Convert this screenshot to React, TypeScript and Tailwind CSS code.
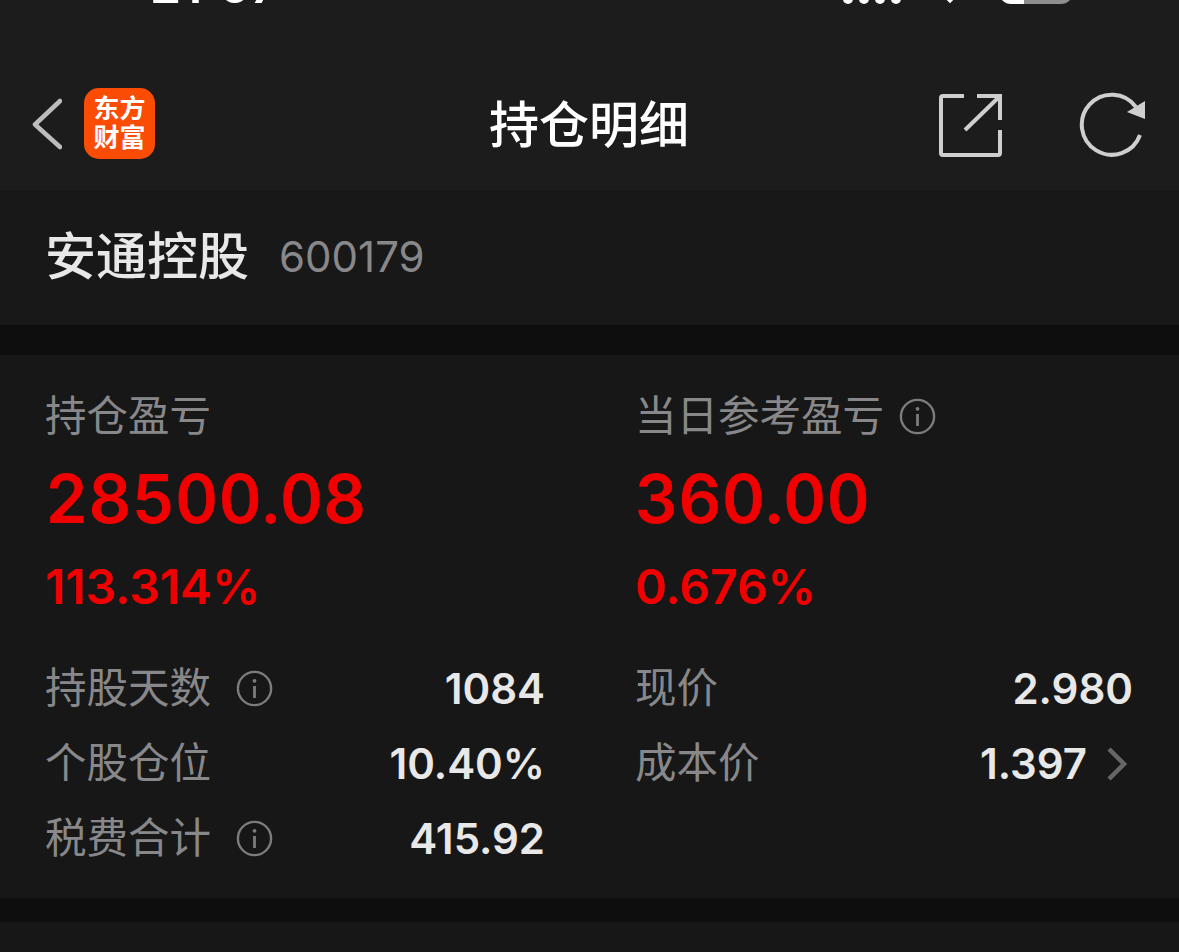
const FONT = "font-['Inter','Noto_Sans_CJK_SC',sans-serif]";

function InfoIcon() {
  return (
    <svg width="37" height="37" viewBox="0 0 37 37" fill="none" stroke="#7c7c7e" className="shrink-0">
      <circle cx="18.5" cy="18.5" r="16.6" strokeWidth="2.4" />
      <circle cx="18.5" cy="10.8" r="1.9" fill="#7c7c7e" stroke="none" />
      <path d="M18.5 16v12" strokeWidth="2.8" />
    </svg>
  );
}

function Stat({ label, info, value, pct }: { label: string; info?: boolean; value: string; pct: string }) {
  return (
    <div className="flex flex-col">
      <div className="flex items-center gap-[15px] h-[42px] text-[41.5px] leading-[42px] text-[#88888b]">
        <span>{label}</span>
        {info && <InfoIcon />}
      </div>
      <div className="mt-[24px] h-[76px] text-[67px] leading-[76px] font-semibold tabular-nums text-[#f00000]">{value}</div>
      <div className="mt-[25px] h-[50px] text-[48px] leading-[50px] font-semibold text-[#f00000]">{pct}</div>
    </div>
  );
}

function Row({ label, info, value, arrow }: { label: string; info?: boolean; value: string; arrow?: boolean }) {
  return (
    <div className="flex items-center h-[75px]">
      <span className="text-[41.5px] text-[#88888b]">{label}</span>
      {info && (
        <span className="ml-[25px]">
          <InfoIcon />
        </span>
      )}
      <span className="ml-auto text-[42px] font-semibold text-[#e8e8e8]">{value}</span>
      {arrow && (
        <svg width="20" height="34" viewBox="0 0 20 34" fill="none" stroke="#666" strokeWidth="4.5" className="ml-[20px] mr-[6px]">
          <path d="M2 2l15 15L2 32" />
        </svg>
      )}
    </div>
  );
}

export default function App() {
  return (
    <div className={`h-[952px] overflow-hidden bg-[#171717] ${FONT}`}>
      <div className="h-[190px] bg-[#1c1c1c] overflow-hidden">
        <div className="flex items-start justify-between h-[50px] -mt-[40px] pl-[150px] pr-[106px] text-white">
          <span className="text-[50px] leading-[50px] font-semibold">21:07</span>
          <div className="flex items-center gap-[34px] h-[47px]">
            <div className="flex items-end gap-[6px]">
              <i className="block w-[10px] h-[40px] bg-white rounded-[5px]" />
              <i className="block w-[10px] h-[40px] bg-white rounded-[5px]" />
              <i className="block w-[10px] h-[40px] bg-white rounded-[5px]" />
              <i className="block w-[10px] h-[40px] bg-white rounded-[5px]" />
            </div>
            <div className="w-[30px] h-[30px] bg-white rotate-45 -translate-y-[2px]" />
            <div className="w-[74px] h-[40px] rounded-[12px] overflow-hidden flex">
              <div className="w-[25px] bg-white" />
              <div className="flex-1 bg-[#8e8e8e]" />
            </div>
          </div>
        </div>
        <div className="grid grid-cols-[1fr_auto_1fr] items-center mt-[76px] pl-[32px] pr-[33px] h-[78px]">
          <div className="flex items-center">
            <svg width="30" height="52" viewBox="0 0 30 52" fill="none" stroke="#bdbdbd" strokeWidth="4.5" strokeLinecap="round" strokeLinejoin="round" className="mb-[2px]">
              <path d="M28 3L3 26.5 28 49" />
            </svg>
            <div className="ml-[22px] mb-[4px] w-[71px] h-[71px] rounded-[15px] bg-[#fb4c05] flex flex-col items-center justify-center text-white text-[26px] leading-[29px] font-bold">
              <span>东方</span>
              <span>财富</span>
            </div>
          </div>
          <div className="text-[50px] font-medium text-white">持仓明细</div>
          <div className="flex items-center justify-end gap-[77px]">
            <svg width="63" height="63" viewBox="0 0 63 63" fill="none" stroke="#cfcfcf" strokeWidth="4">
              <path d="M25 2H4a2 2 0 0 0-2 2v55a2 2 0 0 0 2 2h55a2 2 0 0 0 2-2V36M38 2h23v24M60 3L26 36" />
            </svg>
            <svg width="67" height="66" viewBox="0 0 67 66" fill="none" stroke="#cfcfcf" strokeWidth="4">
              <path d="M61 43A30 30 0 1 1 57 15" />
              <path d="M66 9v18L48 20z" fill="#cfcfcf" stroke="none" />
            </svg>
          </div>
        </div>
      </div>
      <div className="flex items-center h-[135px] pl-[45px] bg-[#181818]">
        <span className="text-[51px] font-medium text-[#e8e8e8]">安通控股</span>
        <span className="ml-[30px] -mt-[2px] text-[42px] text-[#88888b]">600179</span>
      </div>
      <div className="h-[30px] bg-[#0e0e0e]" />
      <div className="h-[543px] pt-[40px] pl-[45px] pr-[46px] bg-[#171717]">
        <div className="grid grid-cols-[500px_498px] gap-x-[90px]">
          <Stat label="持仓盈亏" value="28500.08" pct="113.314%" />
          <Stat label="当日参考盈亏" info value="360.00" pct="0.676%" />
        </div>
        <div className="mt-[39px] grid grid-cols-[500px_498px] gap-x-[90px]">
          <div>
            <Row label="持股天数" info value="1084" />
            <Row label="个股仓位" value="10.40%" />
            <Row label="税费合计" info value="415.92" />
          </div>
          <div>
            <Row label="现价" value="2.980" />
            <Row label="成本价" value="1.397" arrow />
          </div>
        </div>
      </div>
      <div className="h-[24px] bg-[#0e0e0e]" />
      <div className="h-[30px] bg-[#171717]" />
    </div>
  );
}
